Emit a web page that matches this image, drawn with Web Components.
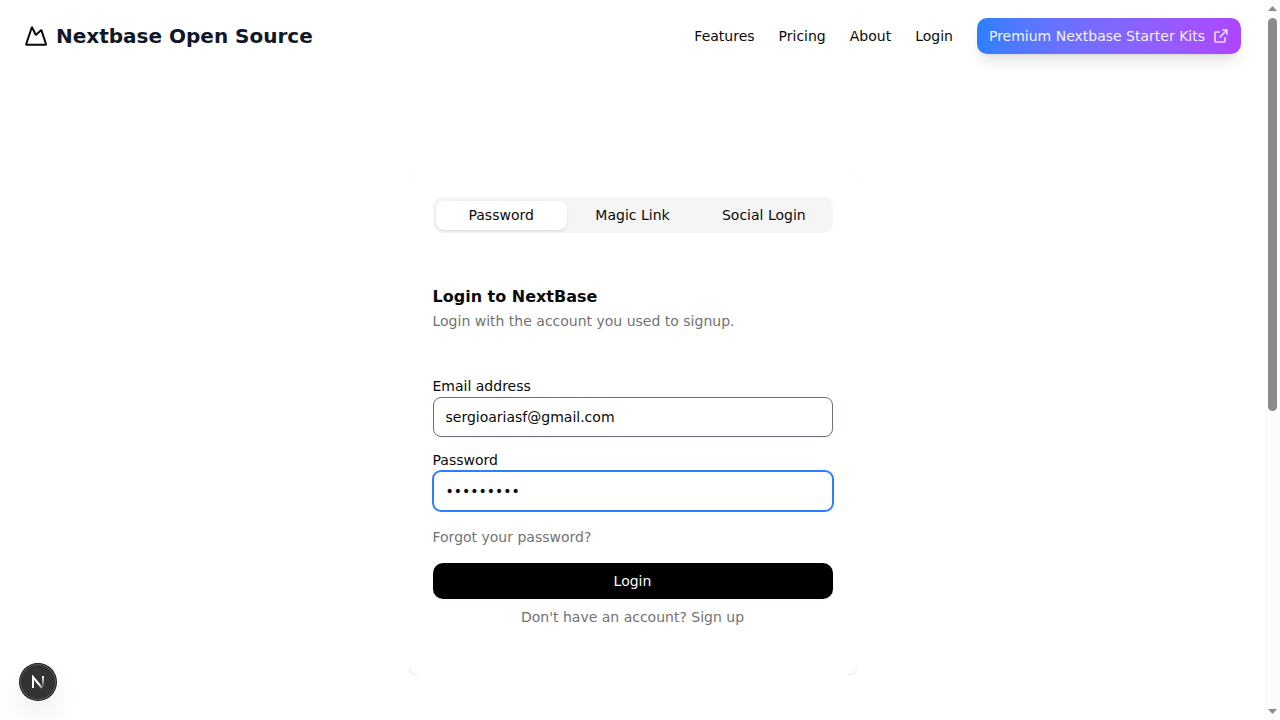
<!DOCTYPE html>
<html lang="en">
<head>
<meta charset="utf-8">
<meta name="viewport" content="width=device-width, initial-scale=1">
<title>Login | Nextbase Open Source</title>
<style>
  body { margin: 0; background: #fff; color: #0a0a0a; font: 14px/20px "DejaVu Sans", sans-serif; }
</style>
</head>
<body>
<app-shell>
  <site-header>
    <nav-link href="#features">Features</nav-link>
    <nav-link href="#pricing">Pricing</nav-link>
    <nav-link href="#about">About</nav-link>
    <nav-link href="#login">Login</nav-link>
    <premium-link slot="action" href="#premium">Premium Nextbase Starter Kits</premium-link>
  </site-header>
  <login-card></login-card>
  <scroll-rail slot="rail"></scroll-rail>
  <dev-badge slot="overlay"></dev-badge>
</app-shell>

<script>
const define = (name, html, setup) => {
  const template = document.createElement('template');
  template.innerHTML = html;
  customElements.define(name, class extends HTMLElement {
    constructor() {
      super();
      this.attachShadow({ mode: 'open' }).append(template.content.cloneNode(true));
    }
    connectedCallback() { if (setup) setup(this, this.shadowRoot); }
  });
};

define('app-shell', `
  <style>
    :host { display: grid; grid-template-columns: minmax(0, 1fr) 15px; height: 100vh; overflow: hidden; }
    .page { overflow: hidden; }
  </style>
  <div class="page"><slot></slot></div>
  <slot name="rail"></slot>
  <slot name="overlay"></slot>`);

define('site-header', `
  <style>
    :host { display: block; }
    header { display: flex; align-items: center; justify-content: space-between; padding: 18px 24px; }
    .brand { display: flex; align-items: center; gap: 8px; color: #101828; text-decoration: none; font-size: 20px; line-height: 28px; font-weight: 700; }
    svg { display: block; width: 24px; height: 24px; color: #0a0a0a; }
    nav { display: flex; align-items: center; gap: 24px; }
  </style>
  <header>
    <a class="brand" href="#home">
      <svg viewBox="0 0 24 24" fill="none" stroke="currentColor" stroke-width="2" aria-hidden="true"><path d="M2 20.8 7.9 3l3.9 8 5.5-5.1L22.2 20.8z" stroke-linejoin="bevel"/></svg>
      <span>Nextbase Open Source</span>
    </a>
    <nav><slot></slot><slot name="action"></slot></nav>
  </header>`);

const passHref = (host, root) => { root.querySelector('a').href = host.getAttribute('href'); };

define('nav-link', `
  <style>
    :host { display: block; }
    a { color: inherit; text-decoration: none; }
  </style>
  <a><slot></slot></a>`, passHref);

define('premium-link', `
  <style>
    :host { display: block; }
    a { display: flex; align-items: center; gap: 8px; padding: 8px 12px; border-radius: 10px; color: #fff; text-decoration: none;
        background: linear-gradient(to right in oklab, #2b7fff, #ad46ff);
        box-shadow: 0 10px 15px -3px rgb(0 0 0 / .1), 0 4px 6px -4px rgb(0 0 0 / .1); }
    span { opacity: .9; }
    svg { display: block; width: 16px; height: 16px; opacity: .8; }
  </style>
  <a><span><slot></slot></span>
    <svg viewBox="0 0 24 24" fill="none" stroke="currentColor" stroke-width="2.4" stroke-linejoin="round" aria-hidden="true"><path d="M10 6H4a1 1 0 0 0-1 1v13a1 1 0 0 0 1 1h13a1 1 0 0 0 1-1v-6M14 3h7v7M21 3 10 14"/></svg>
  </a>`, passHref);

define('login-card', `
  <style>
    :host { display: block; max-width: 448px; margin: 101px auto 0; overflow: hidden; }
    .card { padding: 24px; border-radius: 10px; box-shadow: 0 1px 3px rgb(0 0 0 / .1), 0 1px 2px -1px rgb(0 0 0 / .1); }
    h1 { margin: 56px 0 0; font-size: 16px; line-height: 16px; font-weight: 700; }
    .hint { margin: 6px 0 0; color: #737373; }
    form { display: flex; flex-direction: column; gap: 16px; margin-top: 48px; }
    a { color: #737373; text-decoration: none; }
    .forgot { align-self: flex-start; }
    button { height: 36px; padding: 0 16px; border: 0; border-radius: 10px; background: #000; color: #fafafa; font: inherit; box-shadow: 0 1px 2px rgb(0 0 0 / .05); }
    .signup { margin: 8px 0 24px; text-align: center; }
  </style>
  <section class="card">
    <tab-list>
      <tab-button selected>Password</tab-button>
      <tab-button>Magic Link</tab-button>
      <tab-button>Social Login</tab-button>
    </tab-list>
    <h1>Login to NextBase</h1>
    <p class="hint">Login with the account you used to signup.</p>
    <form>
      <form-field label="Email address" type="email" value="sergioariasf@gmail.com"></form-field>
      <form-field label="Password" type="password" value="nextbase1" current></form-field>
      <a class="forgot" href="#forgot">Forgot your password?</a>
      <button type="button">Login</button>
    </form>
    <p class="signup"><a href="#signup">Don't have an account? Sign up</a></p>
  </section>`);

define('tab-list', `
  <style>
    :host { display: grid; grid-template-columns: repeat(3, minmax(0, 1fr)); align-items: center; box-sizing: border-box; height: 36px; padding: 4px 3px 3px; border-radius: 10px; background: #f5f5f5; }
  </style>
  <slot></slot>`, host => host.setAttribute('role', 'tablist'));

define('tab-button', `
  <style>
    :host { display: block; }
    button { display: block; width: 100%; height: 29px; padding: 0 8px 1px; border: 0; border-radius: 8px; background: none; color: inherit; font: inherit; }
    :host([selected]) button { background: #fff; box-shadow: 0 1px 3px rgb(0 0 0 / .1), 0 1px 2px -1px rgb(0 0 0 / .1); }
  </style>
  <button type="button" role="tab"><slot></slot></button>`,
  (host, root) => root.querySelector('button').setAttribute('aria-selected', host.hasAttribute('selected')));

define('form-field', `
  <style>
    :host { display: flex; flex-direction: column; gap: 4px; }
    label { line-height: 14px; }
    input { box-sizing: border-box; width: 100%; height: 40px; padding: 0 12px; border: 1px solid #6a7282; border-radius: 8px; background: #fff; color: inherit; font: inherit; outline: none; box-shadow: 0 1px 2px rgb(0 0 0 / .05); }
    :host([current]) input { border-color: #2b7fff; box-shadow: 0 0 0 1px #2b7fff; }
  </style>
  <label for="control"></label>
  <input id="control">`,
  (host, root) => {
    const input = root.querySelector('input');
    root.querySelector('label').textContent = host.getAttribute('label');
    input.type = host.getAttribute('type');
    input.value = host.getAttribute('value');
  });

define('scroll-rail', `
  <style>
    :host { display: flex; flex-direction: column; align-items: center; box-sizing: border-box; padding: 6px 0; background: #fcfcfc; }
    svg { display: block; width: 9px; height: 5px; fill: #8b8b8b; }
    .track { display: grid; grid-template-rows: 23fr 17fr; flex: 1; margin: 7px 0; }
    .thumb { width: 9px; border-radius: 5px; background: #8b8b8b; }
  </style>
  <svg viewBox="0 0 18 10" aria-hidden="true"><path d="M9 0 18 10H0z"/></svg>
  <div class="track"><div class="thumb"></div></div>
  <svg viewBox="0 0 18 10" aria-hidden="true"><path d="M0 0h18L9 10z"/></svg>`);

define('dev-badge', `
  <style>
    :host { position: fixed; left: 20px; bottom: 20px; }
    button { display: grid; place-items: center; width: 36px; height: 36px; padding: 0; border: 0; border-radius: 50%; background: #333;
             box-shadow: 0 0 0 1px #171717, inset 0 0 0 1px #585858, 0 16px 32px -8px rgb(0 0 0 / .24); }
    svg { display: block; width: 14px; height: 14px; }
  </style>
  <button type="button" aria-label="Open Next.js Dev Tools">
    <svg viewBox="0 0 14 14" fill="none" aria-hidden="true">
      <defs>
        <linearGradient id="stem" x1="0" y1="1" x2="0" y2="13" gradientUnits="userSpaceOnUse"><stop stop-color="#fff"/><stop offset="1" stop-color="#fff" stop-opacity="0"/></linearGradient>
        <linearGradient id="leg" x1="8" y1="8" x2="13" y2="15" gradientUnits="userSpaceOnUse"><stop stop-color="#fff"/><stop offset="1" stop-color="#fff" stop-opacity=".2"/></linearGradient>
      </defs>
      <path d="M2 13V2l9 11" stroke="url(#leg)" stroke-width="2"/>
      <path d="M12 1v11" stroke="url(#stem)" stroke-width="2"/>
    </svg>
  </button>`);
</script>
</body>
</html>
